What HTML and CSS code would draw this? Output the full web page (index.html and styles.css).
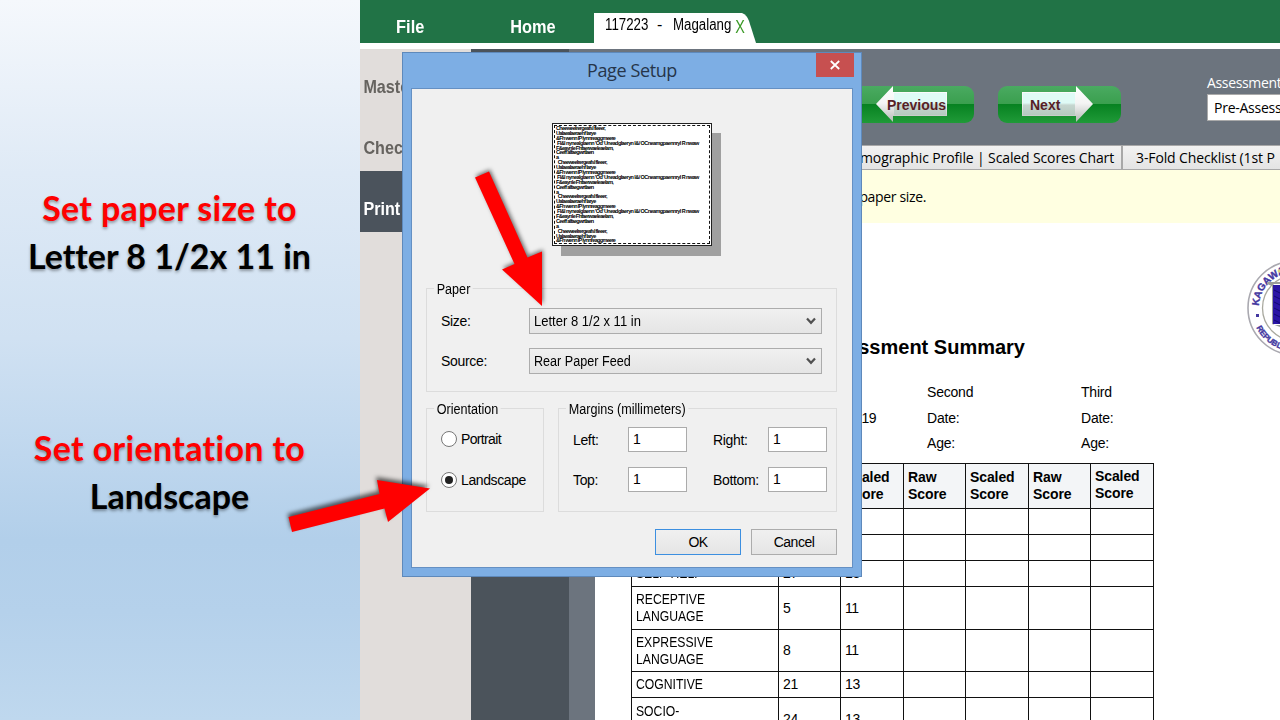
FILE: index.html
```html
<!DOCTYPE html>
<html lang="en">
<head>
<meta charset="utf-8">
<title>Page Setup</title>
<link rel="stylesheet" href="styles.css">
</head>
<body>
<div class="slide">
  <aside class="notes">
    <p class="note"><span class="hl">Set paper size to</span><span>Letter 8 1/2x 11 in</span></p>
    <p class="note"><span class="hl">Set orientation to</span><span>Landscape</span></p>
  </aside>
  <main class="app">
    <header class="topbar">
      <span class="menu file">File</span><span class="menu home">Home</span>
      <div class="doctab"><span class="id">117223</span><span class="dash">-</span><span class="name">Magalang</span><span class="x">X</span></div>
    </header>
    <div class="body">
      <nav class="side"><span>Master</span><span>Check</span><span class="on">Print</span></nav>
      <div class="rail"></div>
      <section class="content">
        <div class="toolbar">
          <div class="gbtn">
            <svg width="74" height="36" viewBox="0 0 74 36"><defs><linearGradient id="ar" x2="0" y2="1"><stop offset="0" stop-color="#fff"/><stop offset=".48" stop-color="#f4f4f4"/><stop offset="1" stop-color="#b4b9b5"/></linearGradient><linearGradient id="bx" x2="0" y2="1"><stop offset="0" stop-color="#dffbf6"/><stop offset=".45" stop-color="#dffbf6"/><stop offset=".55" stop-color="#c6d6d0"/><stop offset="1" stop-color="#b5cabf"/></linearGradient></defs><path d="M1 18 18 0V6H72V30H18V36Z" fill="url(#ar)"/><path d="M19 7H71V29H19Z" fill="url(#bx)"/></svg>
            <b class="prev">Previous</b>
          </div>
          <div class="gbtn nextb">
            <svg width="74" height="36" viewBox="0 0 74 36"><path d="M72 18 55 0V6H1V30H55V36Z" fill="url(#ar)"/><path d="M2 7H54V29H2Z" fill="url(#bx)"/></svg>
            <b class="next">Next</b>
          </div>
          <div class="assess"><label>Assessment</label><div class="sel">Pre-Assess</div></div>
        </div>
        <div class="tabs"><div class="tab first">mographic Profile | Scaled Scores Chart</div><div class="tab second">3-Fold Checklist (1st P</div></div>
        <div class="hint">paper size.</div>
        <div class="doc">
          <h1>Assessment Summary</h1>
          <svg class="seal" width="33" height="100" viewBox="0 0 33 100">
            <circle cx="48" cy="50" r="47" fill="#fff" stroke="#aaa9b0" stroke-width="1.6"/><circle cx="48" cy="50" r="32.5" fill="#fff" stroke="#a9a99f" stroke-width="1.3"/>
            <path id="ta" d="M13 59A36 36 0 0 1 48 14A36 36 0 0 1 84 50" fill="none"/><path id="tb" d="M6.500 62A43 43 0 0 0 62 91" fill="none"/>
            <text class="sealtext"><textPath href="#ta" startOffset="11">KAGAWARAN</textPath></text>
            <text class="sealtext low"><textPath href="#tb" startOffset="8">REPUBLIKA</textPath></text>
            <rect x="9" y="56" width="3" height="3" fill="#4438a0"/>
            <path d="M20 24H33V26H26V67H33V69L25 66V28L20 26Z" fill="#9b9d99"/><path d="M26 27H33V66H26Z" fill="#2b16a5"/><path d="M27 32l6 3m-6 3 6 3m-6 3 6 3m-6 3 6 3m-6 3 6 3m-6 3 6 3" stroke="#120872"/><path d="M30 13l3-2v4z" fill="#d9d978"/>
          </svg>
          <div class="info">
            <div class="i0">19</div>
            <div><span>Second</span><span>Date:</span><span>Age:</span></div>
            <div><span>Third</span><span>Date:</span><span>Age:</span></div>
          </div>
          <div class="table">
            <div class="h"></div><div class="h">Raw<br>Score</div><div class="h">Scaled<br>Score</div><div class="h">Raw<br>Score</div><div class="h">Scaled<br>Score</div><div class="h">Raw<br>Score</div><div class="h last">Scaled<br>Score</div>
            <div></div><div></div><div></div><div></div><div></div><div></div><div></div>
            <div></div><div></div><div></div><div></div><div></div><div></div><div></div>
            <div><span>SELF-HELP</span></div><div>27</div><div>13</div><div></div><div></div><div></div><div></div>
            <div><span>RECEPTIVE<br>LANGUAGE</span></div><div>5</div><div>11</div><div></div><div></div><div></div><div></div>
            <div><span>EXPRESSIVE<br>LANGUAGE</span></div><div>8</div><div>11</div><div></div><div></div><div></div><div></div>
            <div><span>COGNITIVE</span></div><div>21</div><div>13</div><div></div><div></div><div></div><div></div>
            <div class="socio"><span>SOCIO-</span></div><div>24</div><div>13</div><div></div><div></div><div></div><div></div>
          </div>
        </div>
      </section>
    </div>
  </main>

  <div class="dialog">
    <div class="title"><span>Page Setup</span><div class="close"><svg width="12" height="10" viewBox="0 0 12 10"><path d="M1.8 1 10.2 9M10.2 1 1.8 9" stroke="#fff" stroke-width="1.8"/></svg></div></div>
    <div class="client">
      <div class="preview"><div class="sheet">
        <p>Cheeweelrergeafsl fleeer,</p><p>Ualaealaeraehf larye</p><p>&amp;Fh wenn IP lynnreaggmeere</p><p class="w">&nbsp;Fl&amp;l nynealglaenn 'Od' Uneadglaeryn l&amp;/ OCneamgpaennryl R nwaw</p><p>F&amp;eaynle Fhfaerwaeleaelam,</p><p>Ceeff alfaegwrtlaen</p><p>a</p>
        <p>&nbsp; Cheeweelrergeafsl fleeer,</p><p>Ualaealaeraehf larye</p><p>&amp;Fh wenn IP lynnreaggmeere</p><p class="w">&nbsp;Fl&amp;l nynealglaenn 'Od' Uneadglaeryn l&amp;/ OCneamgpaennryl R nwaw</p><p>F&amp;eaynle Fhfaerwaeleaelam,</p><p>Ceeff alfaegwrtlaen</p><p>a</p>
        <p>&nbsp; Cheeweelrergeafsl fleeer,</p><p>Ualaealaeraehf larye</p><p>&amp;Fh wenn IP lynnreaggmeere</p><p class="w">&nbsp;Fl&amp;l nynealglaenn 'Od' Uneadglaeryn l&amp;/ OCneamgpaennryl R nwaw</p><p>F&amp;eaynle Fhfaerwaeleaelam,</p><p>Ceeff alfaegwrtlaen</p><p>a</p>
        <p>&nbsp; Cheeweelrergeafsl fleeer,</p><p>Ualaealaeraehf larye</p><p>&amp;Fh wenn IP lynnreaggmeere</p>
      </div></div>
      <div class="group paper"><span class="legend">Paper</span>
        <div class="row"><label>Size:</label><div class="combo"><span class="c1">Letter 8 1/2 x 11 in</span><svg width="10" height="8" viewBox="0 0 10 8"><path d="M1 1.5 5 5.8 9 1.5" fill="none" stroke="#505050" stroke-width="2.2"/></svg></div></div>
        <div class="row"><label>Source:</label><div class="combo"><span class="c2">Rear Paper Feed</span><svg width="10" height="8" viewBox="0 0 10 8"><path d="M1 1.5 5 5.8 9 1.5" fill="none" stroke="#505050" stroke-width="2.2"/></svg></div></div>
      </div>
      <div class="lower">
        <div class="group orient"><span class="legend">Orientation</span>
          <div class="radio"><i></i><span class="pt">Portrait</span></div><div class="radio checked"><i></i><span>Landscape</span></div>
        </div>
        <div class="group margins"><span class="legend">Margins (millimeters)</span>
          <label>Left:</label><div class="box">1</div><label>Right:</label><div class="box">1</div>
          <label>Top:</label><div class="box">1</div><label>Bottom:</label><div class="box">1</div>
        </div>
      </div>
      <div class="actions"><div class="btn ok">OK</div><div class="btn">Cancel</div></div>
    </div>
  </div>

  <svg class="arrows" width="1280" height="720" viewBox="0 0 1280 720">
    <g fill="#f00"><path class="a1" d="M475 177.500 489 171.500 527.500 257.500 542 251.500V306L502 269.500 514.500 264Z"/><path class="a2" d="M288.500 517 379.500 494 377 480 430 488.500 388 522 384.500 508.500 292 532Z"/></g>
  </svg>
</div>
</body>
</html>
```
FILE: styles.css
```css
*{box-sizing:border-box}
body{margin:0;font-family:"Liberation Sans",Arial,sans-serif;color:#000}
p,h1{margin:0}
.slide{position:relative;width:1280px;height:720px;overflow:hidden;display:flex}
.notes{width:360px;padding-top:184px;background:linear-gradient(#f5f8fc 0,#dfeaf6 24%,#d0e1f2 47%,#bfd7ee 63%,#b2cfea 75%,#b5d1eb 85%,#bfd8ee 100%)}
.note{display:flex;flex-direction:column;align-items:center;height:240px;padding-right:21px;font:700 34px/48px Lato,sans-serif;white-space:nowrap;text-shadow:0 2px 3px rgba(0,0,0,.35);font-variant-ligatures:none}
.hl{color:#f00;letter-spacing:.33px}
.app{width:920px;display:flex;flex-direction:column}
.topbar{height:43px;background:#217346;display:flex;flex:none}
.menu{color:#fff;font-weight:700;font-size:19px;line-height:54px;transform:scaleX(.86);transform-origin:0 0}
.file{width:115px;padding-left:42px}
.home{width:119px;padding-left:41px}
.doctab{width:162px;height:30px;margin-top:13px;background:#fff;clip-path:path("M0 0H148Q153 2 155 8L162 30H0Z");display:flex;padding-left:11px;font-size:16px;line-height:24px;white-space:pre}
.id,.name{transform:scaleX(.83);transform-origin:0 0}
.id{width:52px}.dash{width:16px}.name{width:61px}
.x{color:#3c9a28;font-size:18px;line-height:29px;transform:scaleX(.8)}
.body{margin-top:6px;height:671px;display:flex}
.side{width:111px;background:#e1dddb;display:flex;flex-direction:column}
.side span{height:61px;line-height:76px;padding-left:4px;color:#66635f;font-weight:700;font-size:19px;transform:scaleX(.85);transform-origin:0 0;width:131px}
.side .on{background:#4b535c;color:#fff}
.rail{width:98px;background:#4b535b}
.content{width:711px;background:#6c747e;display:flex;flex-direction:column}
.toolbar{height:96px;padding:37px 0 0 282px;display:flex;flex:none}
.gbtn{width:123px;height:37px;border-radius:9px;background:linear-gradient(#4aaa61,#3a9f4e 49%,#078221 50%,#209a38);display:flex;padding-left:24px;position:relative;flex:none}
.nextb{margin-left:24px;padding-left:23px}
.gbtn b{position:absolute;top:10px;font-size:14px;line-height:18px;color:#571f26}
.prev{left:36px}.next{left:32px}
.assess{margin-left:86px;margin-top:-12px;width:73px;flex:none;font:14px/18px "Open Sans",sans-serif;white-space:nowrap}
.assess label{display:block;height:20px;color:#fff;letter-spacing:-.35px}
.sel{height:27px;background:#fff;border:1px solid #aaa;border-right:0;color:#000;line-height:25px;padding-left:6px;letter-spacing:-.25px}
.tabs{height:25px;display:flex;flex:none}
.tab{height:25px;border:1px solid #a8a8a8;background:linear-gradient(#f2f2f2,#e4e4e4);font:14px/23px "Open Sans",sans-serif;white-space:nowrap}
.first{width:527px;margin-left:26px;text-align:right;padding-right:7px;letter-spacing:-.13px}
.second{width:158px;padding-left:13px;letter-spacing:-.12px;border-right:0}
.hint{margin-left:26px;height:53px;background:#ffffe1;font:14px/54px "Open Sans",sans-serif;text-align:right;padding-right:354px;flex:none;letter-spacing:-.35px}
.doc{margin-left:26px;background:#fff;height:497px;position:relative}
h1{font-size:20px;line-height:24px;padding:112px 255px 0 0;text-align:right}
.seal{position:absolute;right:0;top:35px}
.sealtext{font:700 10px "Liberation Sans",sans-serif;fill:#4438a0;stroke:#4438a0;stroke-width:.4}
.low{font-size:8px}
.info{display:flex;margin:21px 0 0 178px;font-size:14px;line-height:25.600px;height:83px;letter-spacing:-.2px}
.info div{width:154px}.info span{display:block}
.info .i0{text-align:right;padding:26px 51px 0 0;letter-spacing:-.5px}
.table{margin-left:36px;width:523px;display:grid;grid-template-columns:148px 62px 63px 62px 63px 62px 63px;grid-template-rows:45px 26px 26px 26px 43px 42px 26px 43px;border-top:1px solid #111;height:257px;overflow:hidden}
.table div{border-right:1px solid #111;border-bottom:1px solid #111;display:flex;align-items:center;padding-left:4px;font-size:14px;line-height:17px;letter-spacing:-.4px}
.table span{transform:scaleX(.87);transform-origin:0 0;letter-spacing:0}
.table .socio{align-items:flex-start;padding-top:5px}
.table div:nth-child(7n+1){border-left:1px solid #111}
.table .h{background:#f3f5f7;font-weight:700;letter-spacing:-.1px;padding-left:4px}
.table .last{padding-bottom:2px}
.dialog{position:absolute;left:402px;top:52px;width:460px;height:525px;background:#7daee4;border:1px solid #5e89bb;padding:0 8px 8px;display:flex;flex-direction:column;font-size:14px}
.title{height:35px;position:relative;text-align:center;font:18px/35px "Open Sans",sans-serif;color:#26354a;flex:none}
.title span{letter-spacing:-.4px}
.close{position:absolute;right:-1px;top:0;width:38px;height:24px;background:#c75050;display:flex;align-items:center;justify-content:center}
.client{flex:1;background:#f0f0f0;border:1px solid #6590c3;padding:34px 15px 0 14px;display:flex;flex-direction:column}
.preview{height:165px;padding-left:126px}
.sheet{width:160px;height:123px;background:#fff;border:1px solid #222;outline:1px dashed #111;outline-offset:-3px;box-shadow:9px 10px 0 #a0a0a0;padding:2px 0 0 3px;overflow:hidden}
.sheet p{font-weight:700;font-size:5.500px;line-height:4.900px;height:4.900px;white-space:nowrap;letter-spacing:-.68px;color:#000}
.sheet .w{letter-spacing:-.58px}
.group{border:1px solid #dcdcdc;position:relative}
.legend{position:absolute;left:7px;top:-9px;padding:0 3px;line-height:18px;background:#f0f0f0;white-space:nowrap;transform:scaleX(.9);transform-origin:0 0}
.paper{height:104px;padding:19px 14px 0;flex:none}
.row{display:flex;height:40px}
.row label{width:88px;line-height:26px;letter-spacing:-.3px}
.combo{width:294px;height:26px;border:1px solid #acacac;background:linear-gradient(#f0f0f0,#e5e5e5);display:flex;align-items:center;justify-content:space-between;padding:0 5px 0 4px}
.combo span{transform:scaleX(.93);transform-origin:0 0}
.combo .c2{transform:scaleX(.9)}
.lower{display:flex;justify-content:space-between;margin-top:16px;height:104px}
.orient{width:118px;padding:20px 0 0 14px}
.radio{display:flex;height:41px;align-items:flex-start;line-height:20px}
.radio i{width:16px;height:16px;border:1.500px solid #777;border-radius:50%;background:#fff;margin:2px 4px 0 0;display:flex;align-items:center;justify-content:center;flex:none}
.radio span{letter-spacing:-.4px}
.radio .pt{letter-spacing:-.65px}
.checked i::after{content:"";width:8px;height:8px;border-radius:50%;background:#222}
.margins{width:279px;padding:18px 0 0 14px;display:grid;grid-template-columns:55px 85px 55px 59px;grid-template-rows:40px 40px;align-content:start}
.margins label{line-height:26px;letter-spacing:-.35px}
.box{width:59px;height:25px;border:1px solid #ababab;background:#fff;padding-left:4px;line-height:23px}
.actions{display:flex;justify-content:flex-end;gap:10px;margin-top:17px}
.btn{width:86px;height:26px;border:1px solid #acacac;background:linear-gradient(#f0f0f0,#e5e5e5);text-align:center;line-height:25px;letter-spacing:-.5px}
.ok{border:1px solid #3c8fe0}
.arrows{position:absolute;left:0;top:0;pointer-events:none}
.a1{filter:drop-shadow(1px -2px 2px rgba(0,0,0,.55))}
.a2{filter:drop-shadow(-1px -3px 2px rgba(0,0,0,.6))}
```
